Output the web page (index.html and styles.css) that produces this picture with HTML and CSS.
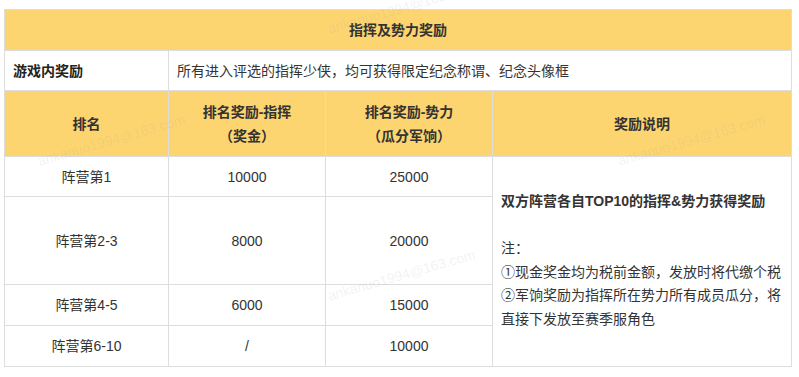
FILE: index.html
```html
<!DOCTYPE html>
<html lang="zh-CN">
<head>
<meta charset="utf-8">
<title>指挥及势力奖励</title>
<link rel="stylesheet" href="styles.css">
</head>
<body>
<div class="page">
  <table class="reward">
    <colgroup>
      <col class="c1"><col class="c2"><col class="c3"><col class="c4">
    </colgroup>
    <tr class="r-title">
      <td colspan="4" class="head center">指挥及势力奖励</td>
    </tr>
    <tr class="r-game">
      <td class="strong">游戏内奖励</td>
      <td colspan="3">所有进入评选的指挥少侠，均可获得限定纪念称谓、纪念头像框</td>
    </tr>
    <tr class="r-head">
      <td class="head center">排名</td>
      <td class="head center two">排名奖励-指挥<br>（奖金）</td>
      <td class="head center two">排名奖励-势力<br>（瓜分军饷）</td>
      <td class="head center">奖励说明</td>
    </tr>
    <tr class="r-1">
      <td class="center">阵营第1</td>
      <td class="center">10000</td>
      <td class="center">25000</td>
      <td rowspan="4" class="notes">
        <div class="notes-body">
          <p class="lead">双方阵营各自TOP10的指挥&amp;势力获得奖励</p>
          <p class="blank"></p>
          <p>注：</p>
          <p>①现金奖金均为税前金额，发放时将代缴个税</p>
          <p>②军饷奖励为指挥所在势力所有成员瓜分，将直接下发放至赛季服角色</p>
        </div>
      </td>
    </tr>
    <tr class="r-2">
      <td class="center">阵营第2-3</td>
      <td class="center">8000</td>
      <td class="center">20000</td>
    </tr>
    <tr class="r-3">
      <td class="center">阵营第4-5</td>
      <td class="center">6000</td>
      <td class="center">15000</td>
    </tr>
    <tr class="r-4">
      <td class="center">阵营第6-10</td>
      <td class="center">/</td>
      <td class="center">10000</td>
    </tr>
  </table>
  <div class="watermarks" aria-hidden="true">
    <span class="wm wm-a">ankanuo1994@163.com</span>
    <span class="wm wm-b">ankanuo1994@163.com</span>
    <span class="wm wm-c">ankanuo1994@163.com</span>
    <span class="wm wm-d">ankanuo1994@163.com</span>
  </div>
</div>
</body>
</html>
```
FILE: styles.css
```css
html, body {
  margin: 0;
  padding: 0;
  background: #ffffff;
}

.page {
  position: relative;
  padding: 9px 0 0 4px;
  font-family: "Liberation Sans", "Noto Sans CJK SC", sans-serif;
  font-size: 14px;
  color: #333333;
  width: 799px;
  height: 377px;
  box-sizing: border-box;
  overflow: hidden;
}

.reward {
  border-collapse: collapse;
  table-layout: fixed;
  width: 787px;
}

.c1 { width: 164px; }
.c2 { width: 157px; }
.c3 { width: 167px; }
.c4 { width: 299px; }

.reward td {
  border: 1px solid #dddddd;
  padding: 0 8px;
  line-height: 24px;
  vertical-align: middle;
}

.r-title { height: 41px; }
.r-game { height: 40px; }
.r-head { height: 66px; }
.r-1 { height: 40px; }
.r-2 { height: 88px; }
.r-3 { height: 41px; }
.r-4 { height: 41px; }

.head {
  background: #fdd570;
  font-weight: 700;
  color: #333333;
}

.two {
  line-height: 26px;
}

.strong {
  font-weight: 700;
  color: #222222;
}

.center {
  text-align: center;
}

.reward td.notes {
  vertical-align: top;
  padding: 0 4px 0 8px;
}

.notes-body {
  margin-top: 33px;
}

.notes-body p {
  margin: 0;
  line-height: 23.6px;
}

.notes-body .lead {
  font-weight: 700;
}

.notes-body .blank {
  height: 23.6px;
}

.watermarks {
  position: absolute;
  inset: 0;
  pointer-events: none;
}

.wm {
  position: absolute;
  font-family: "Liberation Sans", sans-serif;
  font-size: 14px;
  line-height: 16px;
  color: rgba(160, 160, 160, 0.15);
  white-space: nowrap;
  transform-origin: 0 50%;
  transform: rotate(-16deg);
}

.wm-a { left: 328px; top: 21px; }
.wm-b { left: 38px; top: 153px; }
.wm-c { left: 618px; top: 153px; }
.wm-d { left: 328px; top: 288px; }
```
